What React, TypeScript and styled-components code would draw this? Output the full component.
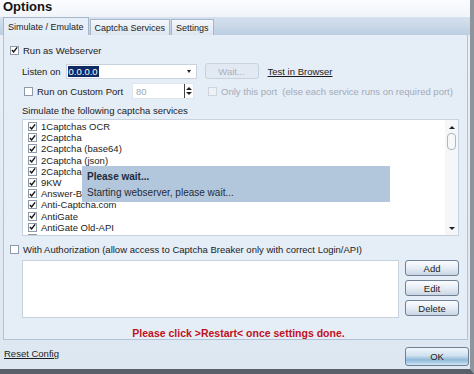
import styled, { createGlobalStyle } from 'styled-components';

const GlobalStyle = createGlobalStyle`
   html, body {
      margin: 0;
      padding: 0;
      background: #ffffff;
   }
   body {
      font-family: 'Liberation Sans', Arial, sans-serif;
      font-size: 9.5px;
      color: #1c1c1c;
   }
`;

const services = [
   '1Captchas OCR',
   '2Captcha',
   '2Captcha (base64)',
   '2Captcha (json)',
   '2Captcha (proxy)',
   '9KW',
   'Answer-Bot',
   'Anti-Captcha.com',
   'AntiGate',
   'AntiGate Old-API',
   'Azcaptcha'
];

const Window = styled.div`
   width: 474px;
   height: 374px;
   box-sizing: border-box;
   display: flex;
   flex-direction: column;
   background: linear-gradient(#fbfcfe 0px, #e8eff7 30px, #dde7f2 100%);
   border-right: 4px solid #8d949c;
   border-bottom: 5px solid #59606a;
   overflow: hidden;
`;

const Title = styled.div`
   height: 17px;
   padding-left: 3px;
   font-size: 13px;
   font-weight: bold;
   line-height: 14px;
   color: #141414;
`;

const TabBar = styled.div`
   display: flex;
   align-items: flex-end;
   height: 18px;
   padding-left: 3px;
   background: linear-gradient(#d6e1ee, #bccee2);
`;

const Tab = styled.div<{ $active?: boolean }>`
   height: ${(p) => (p.$active ? 18 : 16)}px;
   box-sizing: border-box;
   padding: 0 4px;
   margin-right: 1px;
   display: flex;
   align-items: center;
   border: 1px solid #a6b7cb;
   border-bottom: none;
   background: ${(p) => (p.$active ? '#e6eef8' : 'linear-gradient(#f4f7fb, #dde6f0)')};
   font-size: 9px;
   color: #1c1c1c;
`;

const Panel = styled.div`
   position: relative;
   height: 305px;
   margin: 0 2px 0 3px;
   box-sizing: border-box;
   padding: 8px 8px 0 6px;
   background: #e5edf7;
   border: 1px solid #b3c3d6;
   border-top: none;
   display: flex;
   flex-direction: column;
`;

const Row = styled.div<{ $indent?: number; $h?: number }>`
   display: flex;
   align-items: center;
   height: ${(p) => p.$h ?? 16}px;
   padding-left: ${(p) => p.$indent ?? 0}px;
   white-space: nowrap;
`;

const Box = styled.span<{ $disabled?: boolean }>`
   width: 9px;
   height: 9px;
   box-sizing: border-box;
   flex: none;
   border: 1px solid ${(p) => (p.$disabled ? '#cdd5df' : '#8e9aa8')};
   background: ${(p) => (p.$disabled ? '#eef2f7' : '#ffffff')};
   margin-right: 4px;
   display: flex;
   align-items: center;
   justify-content: center;
`;

const Check = ({ checked, disabled }: { checked?: boolean; disabled?: boolean }) => (
   <Box $disabled={disabled}>
      {checked && (
         <svg width="8" height="8" viewBox="0 0 8 8">
            <path d="M1 4 L3 6.2 L7 1" fill="none" stroke="#111" strokeWidth="1.6" />
         </svg>
      )}
   </Box>
);

const Label = styled.span<{ $muted?: boolean }>`
   color: ${(p) => (p.$muted ? '#a3abb6' : '#1c1c1c')};
`;

const Combo = styled.div`
   width: 131px;
   height: 15px;
   box-sizing: border-box;
   margin-left: 5px;
   background: #fff;
   border: 1px solid #c9d3df;
   display: flex;
   align-items: center;
   justify-content: space-between;
   padding: 0 5px 0 1px;
`;

const Selected = styled.span`
   background: #0b2a66;
   color: #ffffff;
   padding: 0 1px;
   line-height: 11px;
`;

const Arrow = styled.span`
   width: 0;
   height: 0;
   border-left: 2.5px solid transparent;
   border-right: 2.5px solid transparent;
   border-top: 3px solid #222;
`;

const Button = styled.div<{ $w: number; $h?: number; $disabled?: boolean; $primary?: boolean }>`
   width: ${(p) => p.$w}px;
   height: ${(p) => p.$h ?? 16}px;
   box-sizing: border-box;
   display: flex;
   align-items: center;
   justify-content: center;
   border: 1px solid ${(p) => (p.$disabled ? '#c7d2de' : '#6f8096')};
   border-radius: 3px;
   background: ${(p) =>
      p.$disabled
         ? '#e2e9f2'
         : p.$primary
         ? 'linear-gradient(#f2f6fb 0%, #cfe0ef 45%, #8fb8d8 70%, #cfe6f6 100%)'
         : 'linear-gradient(#fafcfe 0%, #e6edf5 50%, #c9d5e2 100%)'};
   color: ${(p) => (p.$disabled ? '#a8b2be' : '#1c1c1c')};
`;

const Link = styled.span`
   text-decoration: underline;
   color: #1c1c1c;
`;

const NumInput = styled.div`
   width: 62px;
   height: 16px;
   box-sizing: border-box;
   margin-left: 9px;
   margin-right: 14px;
   display: flex;
   align-items: center;
   justify-content: space-between;
   background: #fff;
   border: 1px solid #dfe6ee;
   padding-left: 3px;
   color: #a0a7b0;
`;

const Spin = styled.div`
   width: 9px;
   height: 14px;
   box-sizing: border-box;
   border-left: 1px solid #444;
   display: flex;
   flex-direction: column;
   align-items: center;
   justify-content: center;
   gap: 2px;
`;

const Tri = styled.span<{ $up?: boolean }>`
   width: 0;
   height: 0;
   border-left: 3px solid transparent;
   border-right: 3px solid transparent;
   ${(p) => (p.$up ? 'border-bottom: 3px solid #222;' : 'border-top: 3px solid #222;')}
`;

const ListBox = styled.div`
   position: relative;
   margin-left: 12px;
   height: 117px;
   box-sizing: border-box;
   background: #fff;
   border: 1px solid #c8d2de;
   display: flex;
   overflow: hidden;
`;

const Items = styled.div`
   flex: 1;
   padding: 1px 0 0 5px;
`;

const Item = styled.div`
   display: flex;
   align-items: center;
   height: 11.2px;
   white-space: nowrap;
`;

const ScrollBar = styled.div`
   width: 13px;
   background: #f4f6f9;
   display: flex;
   flex-direction: column;
   align-items: center;
   padding: 6px 0 5px;
   box-sizing: border-box;
`;

const Thumb = styled.div`
   width: 7px;
   height: 15px;
   margin-top: 4px;
   border: 1px solid #aeb6c0;
   border-radius: 4px;
   background: #f7f8fa;
   flex: none;
`;

const Popup = styled.div`
   position: absolute;
   left: 59px;
   top: 46px;
   width: 308px;
   height: 36px;
   box-sizing: border-box;
   padding: 5px 5px 4px;
   background: #b3c7dc;
   display: flex;
   flex-direction: column;
   justify-content: space-between;
   font-size: 10px;
   color: #1f2b3a;
`;

const AuthArea = styled.div`
   display: flex;
   gap: 6px;
   margin-left: 12px;
`;

const TextArea = styled.div`
   width: 377px;
   height: 58px;
   box-sizing: border-box;
   background: #fff;
   border: 1px solid #c8d2de;
`;

const ButtonCol = styled.div`
   display: flex;
   flex-direction: column;
   gap: 4px;
`;

const Notice = styled.div`
   margin-top: 9px;
   text-align: center;
   color: #c0111c;
   font-weight: bold;
   font-size: 10.5px;
   padding-left: 8px;
`;

const Footer = styled.div`
   flex: 1;
   display: flex;
   justify-content: space-between;
   align-items: flex-start;
   padding: 5px 1px 0 4px;
`;

export default function App() {
   return (
      <>
         <GlobalStyle />
         <Window>
            <Title>Options</Title>
            <TabBar>
               <Tab $active>Simulate / Emulate</Tab>
               <Tab>Captcha Services</Tab>
               <Tab>Settings</Tab>
            </TabBar>
            <Panel>
               <Row $h={14}>
                  <Check checked />
                  <Label>Run as Webserver</Label>
               </Row>
               <Row $indent={12} $h={20} style={{ marginTop: 4 }}>
                  <Label>Listen on</Label>
                  <Combo>
                     <Selected>0.0.0.0</Selected>
                     <Arrow />
                  </Combo>
                  <Button $w={54} $disabled style={{ marginLeft: 8, marginRight: 9 }}>
                     Wait...
                  </Button>
                  <Link>Test in Browser</Link>
               </Row>
               <Row $indent={14} $h={20}>
                  <Check />
                  <Label>Run on Custom Port</Label>
                  <NumInput>
                     80
                     <Spin>
                        <Tri $up />
                        <Tri />
                     </Spin>
                  </NumInput>
                  <Check disabled />
                  <Label $muted>Only this port &nbsp;(else each service runs on required port)</Label>
               </Row>
               <Row $indent={12} $h={17} style={{ marginTop: 1 }}>
                  <Label>Simulate the following captcha services</Label>
               </Row>
               <ListBox>
                  <Items>
                     {services.map((s) => (
                        <Item key={s}>
                           <Check checked />
                           {s}
                        </Item>
                     ))}
                  </Items>
                  <ScrollBar>
                     <Tri $up />
                     <Thumb />
                     <div style={{ flex: 1 }} />
                     <Tri />
                  </ScrollBar>
                  <Popup>
                     <b>Please wait...</b>
                     <span>Starting webserver, please wait...</span>
                  </Popup>
               </ListBox>
               <Row $h={14} style={{ marginTop: 6 }}>
                  <Check />
                  <Label>With Authorization (allow access to Captcha Breaker only with correct Login/API)</Label>
               </Row>
               <AuthArea style={{ marginTop: 4 }}>
                  <TextArea />
                  <ButtonCol>
                     <Button $w={54} $h={16}>Add</Button>
                     <Button $w={54} $h={16}>Edit</Button>
                     <Button $w={54} $h={16}>Delete</Button>
                  </ButtonCol>
               </AuthArea>
               <Notice>Please click &gt;Restart&lt; once settings done.</Notice>
            </Panel>
            <Footer>
               <Link style={{ marginTop: 3 }}>Reset Config</Link>
               <Button $w={64} $h={19} $primary style={{ marginTop: 2 }}>
                  OK
               </Button>
            </Footer>
         </Window>
      </>
   );
}
